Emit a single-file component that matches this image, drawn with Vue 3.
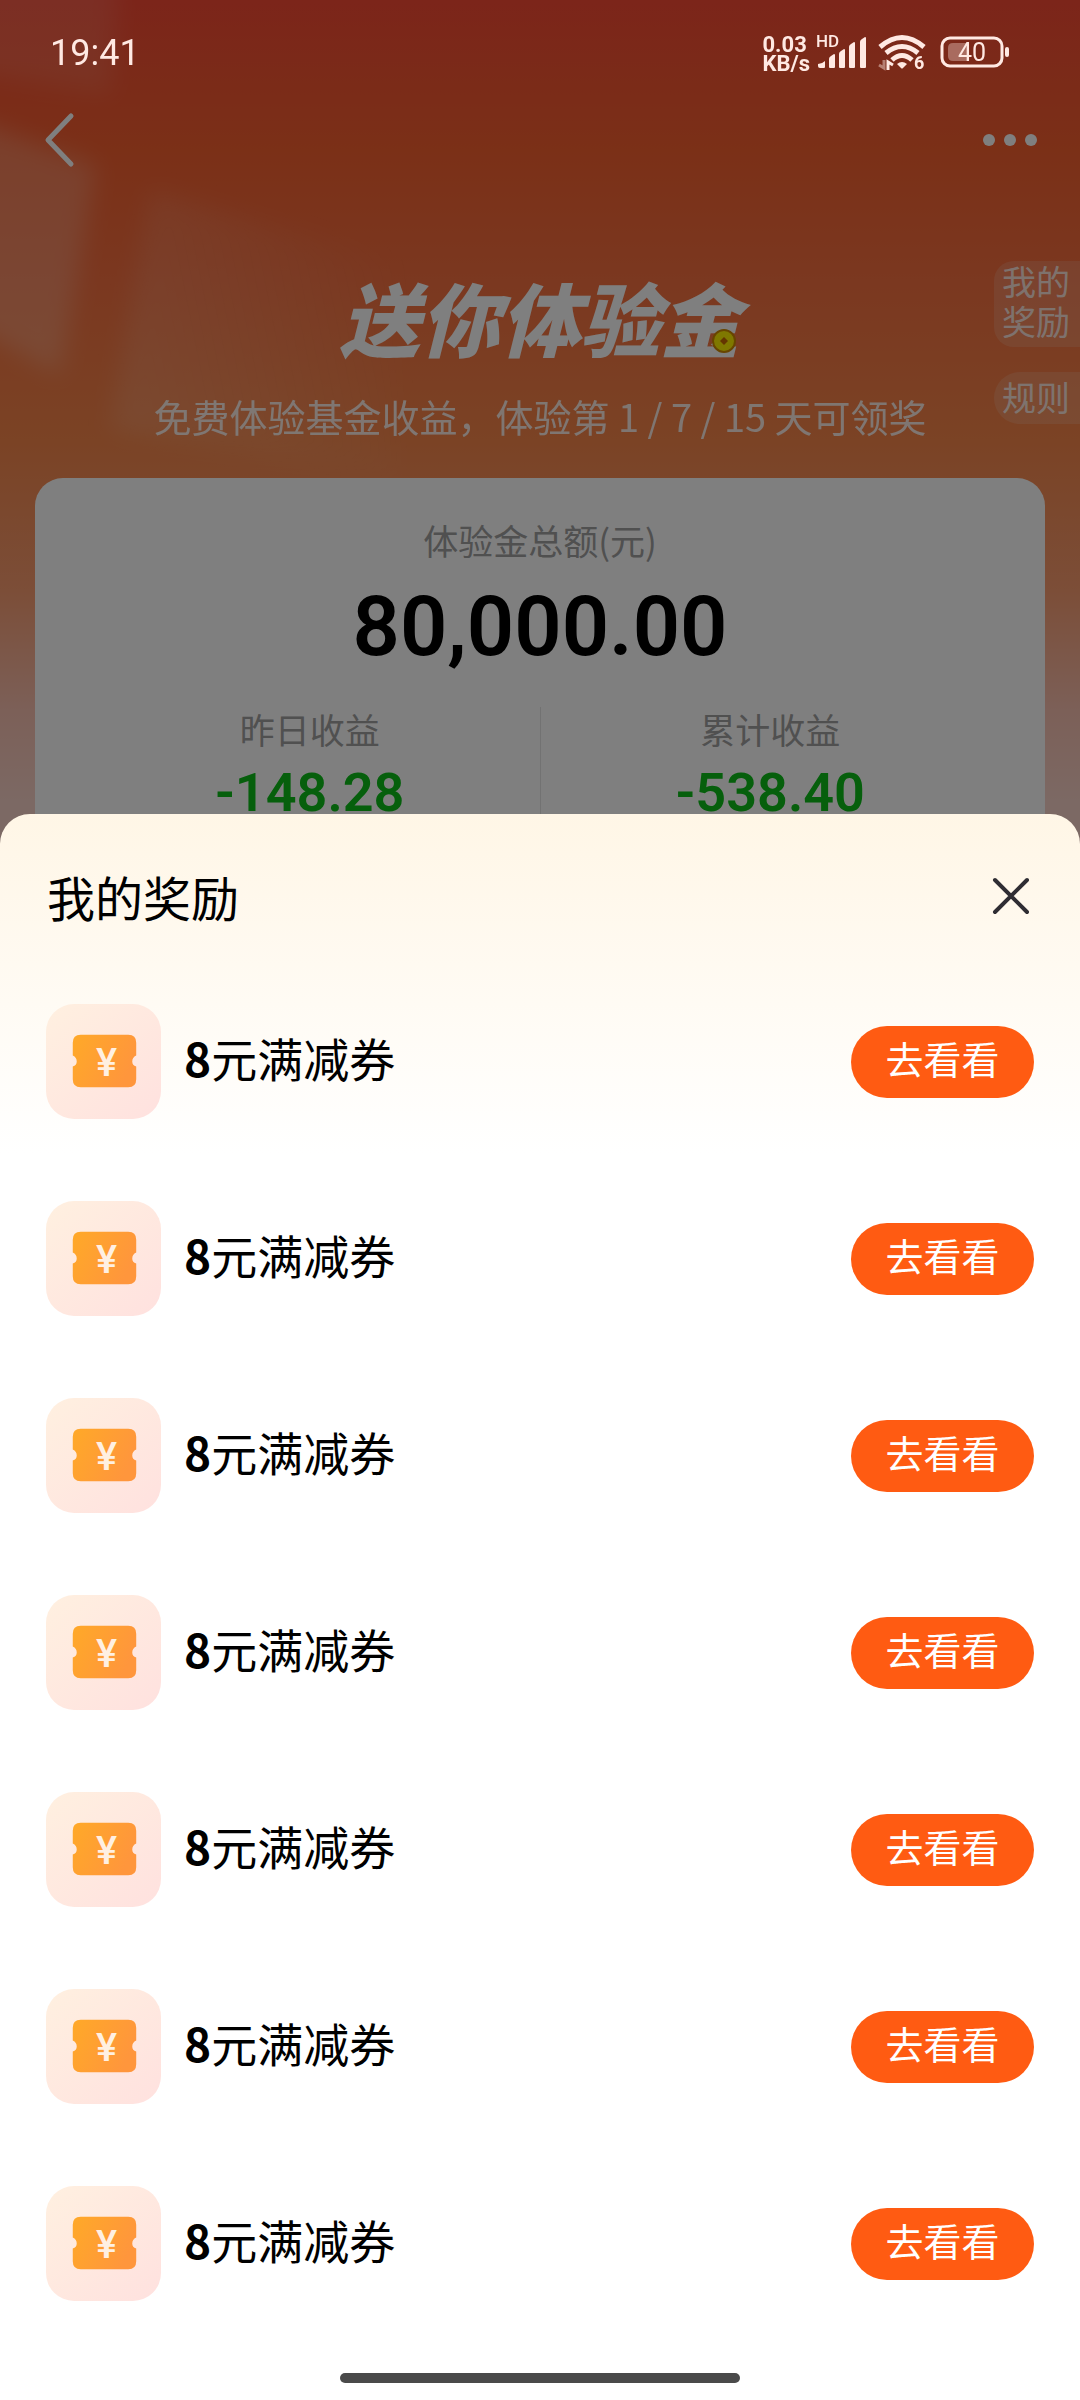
<script setup>
const rewards = Array.from({ length: 7 }, (_, i) => ({ id: i + 1, name: '8元满减券' }))
const stats = [
  { label: '昨日收益', value: '-148.28' },
  { label: '累计收益', value: '-538.40' },
]
</script>

<template>
  <div class="page">
    <div class="status">
      <span class="time">19:41</span>
      <div class="status-right">
        <div class="speed"><span>0.03</span><span>KB/s</span></div>
        <svg class="signal" width="52" height="36" viewBox="0 0 52 36" aria-hidden="true">
          <text x="0" y="13" class="hd">HD</text>
          <path fill="currentColor" d="M4 34q-2 0-2-2v-2q4 0 7-3v6q0 1-1 1zM13 25q0-2 2-3l3-2q1 0 1 1v12q0 1-1 1h-4q-1 0-1-1zM23 20q0-2 2-3l3-2q1 0 1 1v17q0 1-1 1h-4q-1 0-1-1zM33 13q0-2 2-3l3-2q1 0 1 1v24q0 1-1 1h-4q-1 0-1-1zM44 8q0-2 2-3l3-2q1 0 1 1v29q0 1-1 1h-4q-1 0-1-1z" />
        </svg>
        <svg class="wifi" width="50" height="36" viewBox="0 0 50 36" aria-hidden="true">
          <g fill="none" stroke="currentColor" stroke-width="5">
            <path d="M2 13Q24-6 46 13" />
            <path d="M8 19Q24 6 40 19" />
            <path d="M14 26Q24 17 34 26" />
          </g>
          <path fill="currentColor" d="M19 30q5-4 10 0l-4 4q-1 1-2 0z" />
          <path fill="none" stroke="currentColor" stroke-width="3" d="M10 36V28l5 3" />
          <path fill="none" stroke="currentColor" stroke-width="3" opacity=".45" d="M6 26v8l-5-3" />
          <text x="36" y="35" class="six">6</text>
        </svg>
        <svg class="battery" width="70" height="32" viewBox="0 0 70 32" aria-hidden="true">
          <path d="M13 7h14v18H13q-5 0-5-5v-8q0-5 5-5z" fill="currentColor" opacity=".35" />
          <rect x="2" y="2" width="60" height="28" rx="8" fill="none" stroke="currentColor" stroke-width="3" />
          <rect x="65" y="11" width="4" height="10" rx="2" fill="currentColor" />
          <text x="32" y="25" class="level">40</text>
        </svg>
      </div>
    </div>

    <main class="hero">
      <svg class="glow" viewBox="0 0 400 500" aria-hidden="true">
        <defs>
          <linearGradient id="fade" x1="0" y1="0.4" x2="1" y2="0.2">
            <stop offset="0" stop-color="#fff" stop-opacity=".13" />
            <stop offset="1" stop-color="#fff" stop-opacity="0" />
          </linearGradient>
        </defs>
        <path fill="#fff" opacity=".1" d="M-40-40H120L110 95L-40 70Z" />
        <path fill="#fff" opacity=".2" d="M-40 115L96 165L60 375L-40 320Z" />
        <path fill="url(#fade)" d="M150 190L400 260L400 480L110 430Z" />
      </svg>
      <nav class="nav">
        <button class="icon-btn" aria-label="返回">
          <svg width="32" height="56" viewBox="0 0 32 56"><path d="M28 4L5 28L28 52" fill="none" stroke="#fff" stroke-width="5" stroke-linecap="round" stroke-linejoin="round" /></svg>
        </button>
        <button class="icon-btn" aria-label="更多">
          <svg width="54" height="12" viewBox="0 0 54 12" fill="#fff"><circle cx="6" cy="6" r="6" /><circle cx="27" cy="6" r="6" /><circle cx="48" cy="6" r="6" /></svg>
        </button>
      </nav>
      <div class="side">
        <a href="#rewards" class="tab">我的<br>奖励</a>
        <a href="#rules" class="tab round">规则</a>
      </div>
      <h1 class="title">
        送你体验金
        <svg class="coin" viewBox="0 0 24 24" aria-hidden="true">
          <circle cx="12" cy="12" r="11" fill="#fff000" stroke="#d08a00" stroke-width="2" />
          <path d="M12 8l4 4-4 4-4-4z" fill="#c86a00" />
        </svg>
      </h1>
      <p class="subtitle">免费体验基金收益，体验第 1 / 7 / 15 天可领奖</p>
      <section class="card">
        <p class="label">体验金总额(元)</p>
        <p class="total">80,000.00</p>
        <div class="stats">
          <div v-for="s in stats" :key="s.label" class="stat">
            <span class="label">{{ s.label }}</span>
            <span class="value">{{ s.value }}</span>
          </div>
        </div>
      </section>
      <div class="mask"></div>
    </main>

    <section id="rewards" class="sheet">
      <header class="sheet-head">
        <h2>我的奖励</h2>
        <button class="icon-btn" aria-label="关闭">
          <svg width="40" height="40" viewBox="0 0 40 40"><path d="M4 4L36 36M36 4L4 36" fill="none" stroke="#2f2d33" stroke-width="4" stroke-linecap="round" /></svg>
        </button>
      </header>
      <ul class="list">
        <li v-for="r in rewards" :key="r.id" class="row">
          <span class="tile">
            <svg viewBox="0 0 116 116" aria-hidden="true">
              <defs>
                <linearGradient :id="'ticket' + r.id" x1="0" y1="0" x2="1" y2="0.4">
                  <stop offset="0" stop-color="#ffa928" />
                  <stop offset="1" stop-color="#ff963c" />
                </linearGradient>
              </defs>
              <path :fill="`url(#ticket${r.id})`" d="M35 31H83Q91 31 91 39V52Q87 54 87 58T91 63V76Q91 84 83 84H35Q27 84 27 76V63Q31 62 31 58T27 52V39Q27 31 35 31Z" />
              <text x="61" y="73" class="yen">¥</text>
            </svg>
          </span>
          <span class="name"><b>{{ r.name[0] }}</b>{{ r.name.slice(1) }}</span>
          <button class="go">去看看</button>
        </li>
      </ul>
      <div class="home"><span></span></div>
    </section>
  </div>
</template>

<style>
body {
  margin: 0;
}
</style>

<style scoped>
.page {
  position: relative;
  display: flex;
  flex-direction: column;
  min-height: 100vh;
  background: #fff;
  color: #000;
  font-family: "Noto Sans CJK SC", sans-serif;
}
h1, h2, p, ul {
  margin: 0;
  padding: 0;
}
button {
  border: 0;
  padding: 0;
  background: none;
  font-family: inherit;
}
svg {
  display: block;
  overflow: visible;
}
.status {
  position: absolute;
  z-index: 2;
  top: 0;
  left: 0;
  right: 0;
  height: 104px;
  padding: 0 70px 0 50px;
  display: flex;
  align-items: center;
  justify-content: space-between;
  color: #ffe9e3;
}
.time {
  padding-top: 2px;
  font: 400 36px/44px Roboto, sans-serif;
}
.status-right {
  display: flex;
  align-items: center;
}
.speed {
  display: flex;
  flex-direction: column;
  font: 700 22px/19px Roboto, sans-serif;
  margin-right: 6px;
  padding-top: 4px;
}
.wifi {
  margin: 0 12px 0 10px;
}
.hd {
  font: 500 17px Roboto, sans-serif;
  fill: currentColor;
}
.six {
  font: 700 18px Roboto, sans-serif;
  fill: currentColor;
}
.level {
  font: 400 25px Roboto, sans-serif;
  fill: currentColor;
  text-anchor: middle;
}
.hero {
  position: relative;
  overflow: hidden;
  padding: 104px 35px 0;
  background: linear-gradient(to bottom, #f84a34 0, #f6602f 150px, #f67040 280px, #f6864a 440px, #f89c70 590px, #f8c0b0 710px, #f8d2c8 800px);
}
.glow {
  position: absolute;
  top: 0;
  left: 0;
  width: 400px;
  filter: blur(12px);
}
.nav {
  position: relative;
  display: flex;
  align-items: center;
  justify-content: space-between;
  height: 72px;
  padding: 0 8px;
}
.side {
  position: absolute;
  top: 261px;
  right: 0;
  width: 86px;
  display: flex;
  flex-direction: column;
  gap: 25px;
}
.tab {
  padding: 0 0 6px 8px;
  border-radius: 20px 0 0 20px;
  background: rgba(255, 255, 255, .15);
  color: rgba(255, 255, 255, .8);
  font-size: 34px;
  line-height: 40px;
  text-decoration: none;
}
.round {
  padding: 5px 0 7px 8px;
  border-radius: 26px 0 0 26px;
}
.title {
  position: relative;
  width: max-content;
  margin: 88px auto 0;
  color: #fff;
  font-size: 80px;
  font-weight: 900;
  font-style: italic;
  line-height: 104px;
}
.coin {
  position: absolute;
  right: 4px;
  bottom: 15px;
  width: 24px;
}
.subtitle {
  position: relative;
  margin-top: 26px;
  color: rgba(255, 255, 255, .85);
  font-size: 38px;
  line-height: 44px;
  text-align: center;
  white-space: nowrap;
}
.card {
  position: relative;
  margin-top: 40px;
  padding: 40px 45px 60px;
  border-radius: 28px 28px 0 0;
  background: #fff;
  text-align: center;
}
.label {
  color: #a0a0a0;
  font-size: 35px;
  line-height: 44px;
}
.total {
  margin-top: 5px;
  font: 600 83px/120px Roboto, sans-serif;
}
.stats {
  display: flex;
  margin-top: 20px;
}
.stat {
  flex: 1;
  display: flex;
  flex-direction: column;
}
.stat + .stat {
  border-left: 1px solid #e4e4e4;
}
.value {
  color: #0cbf18;
  font: 600 54px/72px Roboto, sans-serif;
  margin-top: 6px;
}
.mask {
  position: absolute;
  inset: 0;
  background: rgba(0, 0, 0, .5);
}
.sheet {
  position: relative;
  flex: 1;
  margin-top: -75px;
  border-radius: 30px 30px 0 0;
  background: linear-gradient(to bottom, #fff6e6 0, #fff 340px);
}
.sheet-head {
  display: flex;
  align-items: center;
  justify-content: space-between;
  height: 134px;
  padding: 15px 49px 0 47px;
}
.sheet-head h2 {
  font-size: 48px;
  font-weight: 400;
}
.list {
  list-style: none;
}
.row {
  display: flex;
  align-items: center;
  height: 197px;
  padding: 0 46px;
}
.tile {
  width: 115px;
  border-radius: 28px;
  background: linear-gradient(135deg, #fff0e0, #ffe1df);
}
.yen {
  font: 500 40px Roboto, sans-serif;
  fill: #fff0e2;
  text-anchor: middle;
}
.name {
  flex: 1;
  margin-left: 23px;
  padding-bottom: 10px;
  font-size: 46px;
  line-height: 60px;
}
.name b {
  font-weight: 700;
}
.go {
  box-sizing: border-box;
  width: 183px;
  height: 72px;
  padding-bottom: 8px;
  border-radius: 36px;
  background: #ff5b12;
  color: #fff;
  font-size: 38px;
  line-height: 64px;
}
.home {
  padding: 31px 0 17px;
}
.home span {
  display: block;
  width: 37%;
  height: 10px;
  margin: 0 auto;
  border-radius: 5px;
  background: #4a4a4a;
}
</style>
